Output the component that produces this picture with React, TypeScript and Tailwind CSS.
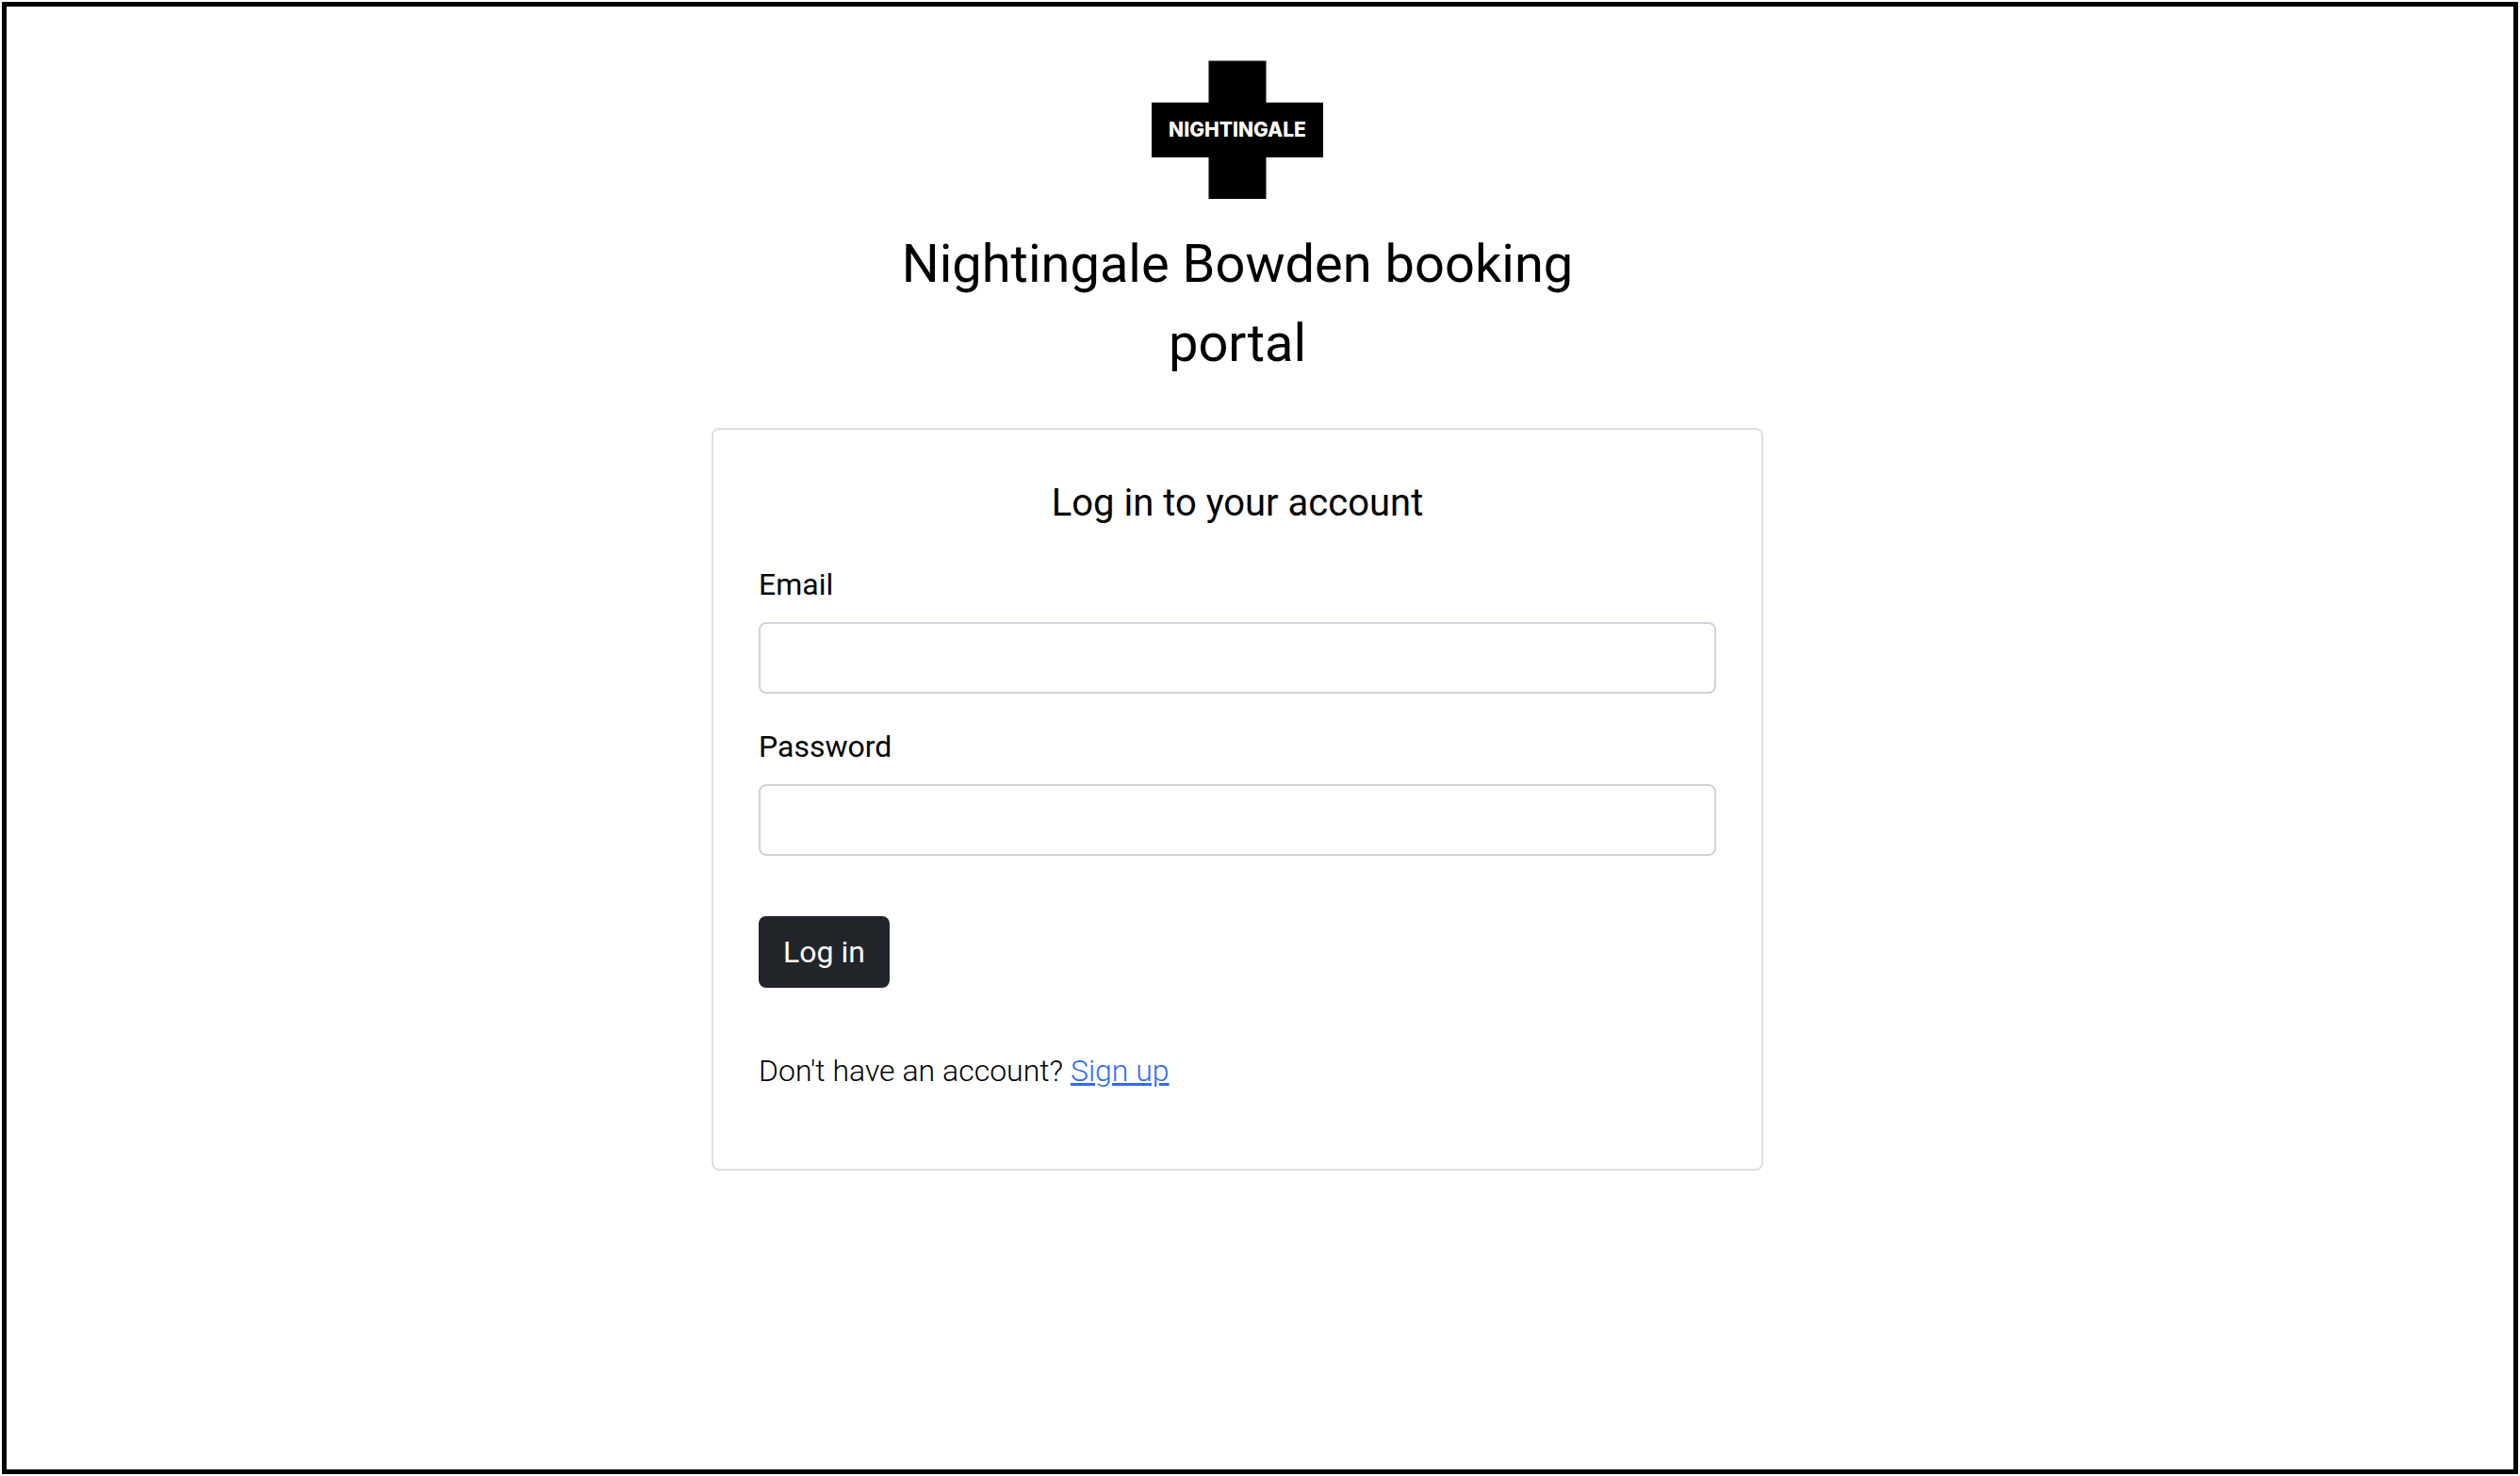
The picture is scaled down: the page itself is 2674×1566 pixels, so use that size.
import React from "react";

function Logo() {
  return (
    <svg
      className="h-[148px] w-[184px]"
      viewBox="0 0 184 148"
      role="img"
      aria-label="Nightingale"
    >
      <path d="M61.5 0.5H122.5V44.7H183V103H122.5V147H61.5V103H1V44.7H61.5Z" fill="#000" />
      <text
        x="92"
        y="81"
        textAnchor="middle"
        fill="#fff"
        className="font-[Inter,sans-serif] text-[21px] font-extrabold"
      >
        NIGHTINGALE
      </text>
    </svg>
  );
}

type FieldProps = { id: string; label: string; type: string };

function Field({ id, label, type }: FieldProps) {
  return (
    <div className="flex flex-col gap-4">
      <label htmlFor={id}>{label}</label>
      <input
        id={id}
        name={id}
        type={type}
        className="h-19 w-full rounded-lg border-2 border-[#ced4da] bg-white px-6"
      />
    </div>
  );
}

export default function App() {
  return (
    <div className="flex min-h-screen bg-white p-0.5 font-[Roboto,sans-serif] text-[32px] leading-[48px] text-black">
      <main className="flex grow flex-col items-center border-[5px] border-black pt-[57px] pr-12">
        <Logo />
        <h1 className="mt-[26px] max-w-[760px] text-center text-[56px] leading-[84px]">
          Nightingale Bowden booking portal
        </h1>
        <section className="mt-12 w-full max-w-[1116px] rounded-lg border-2 border-[#dfdfdf] p-12">
          <h2 className="text-center text-[40px] leading-[60px]">Log in to your account</h2>
          <form className="mt-8 flex flex-col gap-8" onSubmit={(e) => e.preventDefault()}>
            <Field id="email" label="Email" type="email" />
            <Field id="password" label="Password" type="password" />
            <button
              type="submit"
              className="mt-8 h-19 self-start rounded-lg bg-[#212529] px-[26px] text-white"
            >
              Log in
            </button>
          </form>
          <p className="mt-16 mb-8 font-light">
            Don't have an account?{" "}
            <a href="#signup" className="text-[#2f6bf6] underline decoration-[3px]">
              Sign up
            </a>
          </p>
        </section>
      </main>
    </div>
  );
}
